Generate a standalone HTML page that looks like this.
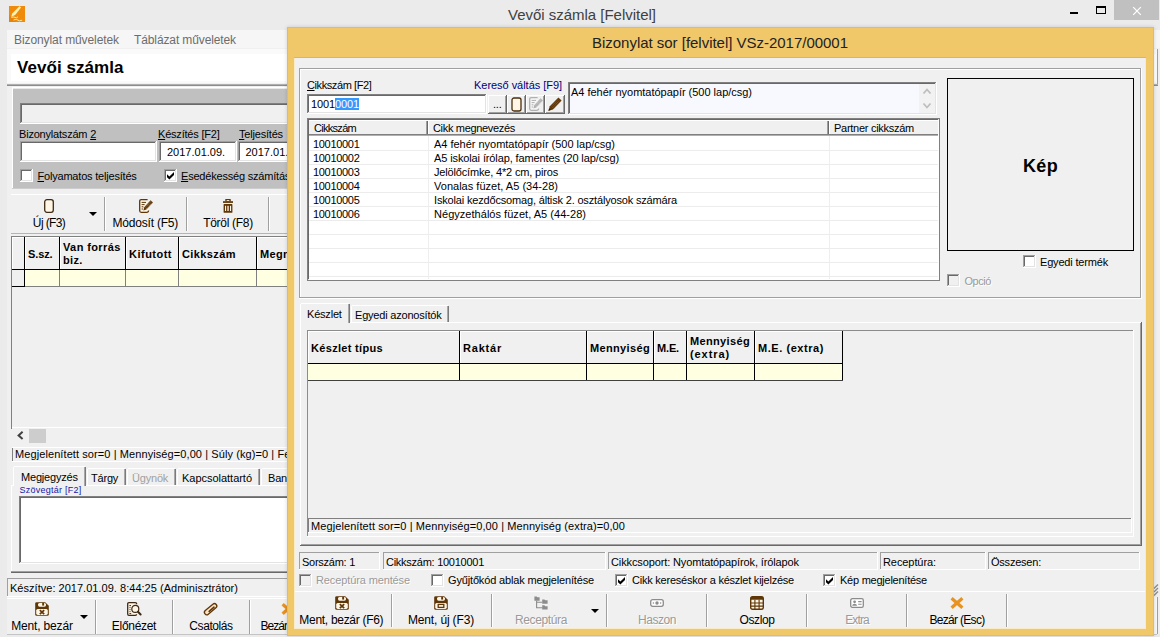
<!DOCTYPE html>
<html lang="hu"><head><meta charset="utf-8"><title>Vevői számla [Felvitel]</title>
<style>
html,body{margin:0;padding:0;}
body{width:1160px;height:637px;overflow:hidden;background:#EBEBEB;font-family:"Liberation Sans", sans-serif;position:relative;}
#root{position:absolute;left:0;top:0;width:1160px;height:637px;overflow:hidden;}
#root div,#root svg{position:absolute;}
.t{white-space:pre;line-height:normal;}
u{text-decoration:underline;}
</style></head>
<body><div id="root">
<div style="left:0px;top:0px;width:1160px;height:637px;background:#EBEBEB;"></div>
<div style="left:9px;top:6px;width:16px;height:16px;background:#EF8A0A;"></div>
<svg style="left:9px;top:6px" width="16" height="16" viewBox="0 0 16 16"><path d="M0 16V9L7 16z" fill="#D97A08" opacity="0.5"/><path d="M10.4 0.2L12.2 1.2L6.4 8.8L2.2 11L3.2 7.4z" fill="#FFF1B0"/><path d="M2.4 11.6q2-1.2 3.6-0.2t3-0.6M4.6 14q3-1.6 4.2 0t4.4 0.2" stroke="#FFE7A0" stroke-width="1" fill="none"/></svg>
<div id="t1" class="t" style="left:430px;top:6px;font-size:15px;color:#404040;width:304px;text-align:center;letter-spacing:-0.017px;">Vevői számla [Felvitel]</div>
<div style="left:1070px;top:12px;width:8px;height:2px;background:#000;"></div>
<div style="left:1096px;top:6px;width:10px;height:8px;border:1px solid #000;border-top:2px solid #000;box-sizing:border-box;"></div>
<div style="left:1114px;top:0px;width:45px;height:20px;background:#C0C0C0;"></div>
<svg style="left:1132px;top:6px" width="10" height="10" viewBox="0 0 10 10"><path d="M1.2 1.2l7.6 7.6m0-7.6l-7.6 7.6" stroke="#fff" stroke-width="1.2" fill="none"/></svg>
<div style="left:7px;top:30px;width:1153px;height:607px;background:#F0F0F0;"></div>
<div style="left:7px;top:30px;width:1153px;height:18px;background:#F6F6F6;"></div>
<div id="t2" class="t" style="left:14px;top:33px;font-size:12px;color:#6D6D6D;letter-spacing:-0.09px;">Bizonylat műveletek</div>
<div id="t3" class="t" style="left:134px;top:33px;font-size:12px;color:#6D6D6D;letter-spacing:-0.115px;">Táblázat műveletek</div>
<div style="left:7px;top:49px;width:1150px;height:34px;background:#FAFAFA;"></div>
<div style="left:11px;top:54px;width:1145px;height:27px;background:#FFFFFF;"></div>
<div style="left:1157px;top:49px;width:1px;height:36px;background:#A0A0A0;"></div>
<div id="t4" class="t" style="left:17px;top:58px;font-size:17px;color:#000;font-weight:bold;letter-spacing:0.055px;">Vevői számla</div>
<div style="left:7px;top:84px;width:1151px;height:1px;background:#B0B0B0;"></div>
<div style="left:7px;top:85px;width:1151px;height:1px;background:#8C8C8C;"></div>
<div style="left:12px;top:87px;width:275px;height:102px;background:#C0C0C0;"></div>
<div style="left:12px;top:87px;width:275px;height:1px;background:#FFFFFF;"></div>
<div style="left:12px;top:88px;width:275px;height:1px;background:#E8E8E8;"></div>
<div style="left:12px;top:87px;width:1px;height:102px;background:#FFFFFF;"></div>
<div style="left:12px;top:188px;width:275px;height:1px;background:#CDCDCD;"></div>
<div style="left:20px;top:103px;width:270px;height:21px;background:#F0F0F0;"></div>
<div style="left:20px;top:103px;width:270px;height:1px;background:#808080;"></div>
<div style="left:20px;top:103px;width:1px;height:21px;background:#808080;"></div>
<div style="left:20px;top:123px;width:270px;height:1px;background:#FFFFFF;"></div>
<div style="left:289px;top:103px;width:1px;height:21px;background:#FFFFFF;"></div>
<div style="left:21px;top:104px;width:268px;height:1px;background:#696969;"></div>
<div style="left:21px;top:104px;width:1px;height:19px;background:#696969;"></div>
<div style="left:21px;top:122px;width:268px;height:1px;background:#E3E3E3;"></div>
<div style="left:288px;top:104px;width:1px;height:19px;background:#E3E3E3;"></div>
<div id="t5" class="t" style="left:19px;top:128px;font-size:11px;color:#000;letter-spacing:-0.2px;">Bizonylatszám <u>2</u></div>
<div id="t6" class="t" style="left:158px;top:128px;font-size:11px;color:#000;letter-spacing:-0.2px;"><u>K</u>észítés [F2]</div>
<div id="t7" class="t" style="left:239px;top:128px;font-size:11px;color:#000;letter-spacing:-0.2px;"><u>T</u>eljesítés</div>
<div style="left:20px;top:141px;width:137px;height:21px;background:#FFFFFF;"></div>
<div style="left:20px;top:141px;width:137px;height:1px;background:#A0A0A0;"></div>
<div style="left:20px;top:141px;width:1px;height:21px;background:#A0A0A0;"></div>
<div style="left:20px;top:161px;width:137px;height:1px;background:#FFFFFF;"></div>
<div style="left:156px;top:141px;width:1px;height:21px;background:#FFFFFF;"></div>
<div style="left:21px;top:142px;width:135px;height:1px;background:#696969;"></div>
<div style="left:21px;top:142px;width:1px;height:19px;background:#696969;"></div>
<div style="left:21px;top:160px;width:135px;height:1px;background:#E3E3E3;"></div>
<div style="left:155px;top:142px;width:1px;height:19px;background:#E3E3E3;"></div>
<div style="left:159px;top:141px;width:78px;height:21px;background:#FFFFFF;"></div>
<div style="left:159px;top:141px;width:78px;height:1px;background:#A0A0A0;"></div>
<div style="left:159px;top:141px;width:1px;height:21px;background:#A0A0A0;"></div>
<div style="left:159px;top:161px;width:78px;height:1px;background:#FFFFFF;"></div>
<div style="left:236px;top:141px;width:1px;height:21px;background:#FFFFFF;"></div>
<div style="left:160px;top:142px;width:76px;height:1px;background:#696969;"></div>
<div style="left:160px;top:142px;width:1px;height:19px;background:#696969;"></div>
<div style="left:160px;top:160px;width:76px;height:1px;background:#E3E3E3;"></div>
<div style="left:235px;top:142px;width:1px;height:19px;background:#E3E3E3;"></div>
<div style="left:238px;top:141px;width:78px;height:21px;background:#FFFFFF;"></div>
<div style="left:238px;top:141px;width:78px;height:1px;background:#A0A0A0;"></div>
<div style="left:238px;top:141px;width:1px;height:21px;background:#A0A0A0;"></div>
<div style="left:238px;top:161px;width:78px;height:1px;background:#FFFFFF;"></div>
<div style="left:315px;top:141px;width:1px;height:21px;background:#FFFFFF;"></div>
<div style="left:239px;top:142px;width:76px;height:1px;background:#696969;"></div>
<div style="left:239px;top:142px;width:1px;height:19px;background:#696969;"></div>
<div style="left:239px;top:160px;width:76px;height:1px;background:#E3E3E3;"></div>
<div style="left:314px;top:142px;width:1px;height:19px;background:#E3E3E3;"></div>
<div id="t8" class="t" style="left:167px;top:146px;font-size:11px;color:#000;letter-spacing:0.007px;">2017.01.09.</div>
<div id="t9" class="t" style="left:245.5px;top:146px;font-size:11px;color:#000;letter-spacing:0.007px;">2017.01.09.</div>
<div style="left:20px;top:169px;width:13px;height:13px;background:#FFFFFF;"></div>
<div style="left:20px;top:169px;width:12px;height:1px;background:#A0A0A0;"></div>
<div style="left:20px;top:169px;width:1px;height:12px;background:#A0A0A0;"></div>
<div style="left:21px;top:170px;width:10px;height:1px;background:#696969;"></div>
<div style="left:21px;top:170px;width:1px;height:10px;background:#696969;"></div>
<div style="left:20px;top:181px;width:13px;height:1px;background:#FFFFFF;"></div>
<div style="left:32px;top:169px;width:1px;height:13px;background:#FFFFFF;"></div>
<div style="left:21px;top:180px;width:11px;height:1px;background:#E3E3E3;"></div>
<div style="left:31px;top:170px;width:1px;height:11px;background:#E3E3E3;"></div>
<div id="t10" class="t" style="left:37.5px;top:170px;font-size:11px;color:#000;letter-spacing:-0.2px;"><u>F</u>olyamatos teljesítés</div>
<div style="left:164px;top:169px;width:13px;height:13px;background:#FFFFFF;"></div>
<div style="left:164px;top:169px;width:12px;height:1px;background:#A0A0A0;"></div>
<div style="left:164px;top:169px;width:1px;height:12px;background:#A0A0A0;"></div>
<div style="left:165px;top:170px;width:10px;height:1px;background:#696969;"></div>
<div style="left:165px;top:170px;width:1px;height:10px;background:#696969;"></div>
<div style="left:164px;top:181px;width:13px;height:1px;background:#FFFFFF;"></div>
<div style="left:176px;top:169px;width:1px;height:13px;background:#FFFFFF;"></div>
<div style="left:165px;top:180px;width:11px;height:1px;background:#E3E3E3;"></div>
<div style="left:175px;top:170px;width:1px;height:11px;background:#E3E3E3;"></div>
<svg style="left:164px;top:169px" width="13" height="13" viewBox="0 0 13 13"><path d="M3 5.2v3l2.4 2.4 4.6-4.6v-3l-4.6 4.6z" fill="#000"/></svg>
<div id="t11" class="t" style="left:181px;top:170px;font-size:11px;color:#000;letter-spacing:-0.2px;"><u>E</u>sedékesség számítás</div>
<div style="left:11px;top:194px;width:276px;height:1px;background:#FFFFFF;"></div>
<div style="left:11px;top:233px;width:276px;height:1px;background:#B4B4B4;"></div>
<svg style="left:44px;top:199px" width="10" height="14" viewBox="0 0 10 14"><rect x="0.7" y="0.7" width="8.6" height="12.6" rx="2.2" fill="#FFF6E6" stroke="#3E2A14" stroke-width="1.3"/></svg>
<div id="t12" class="t" style="left:-11px;top:216px;font-size:12px;color:#000;width:120px;text-align:center;letter-spacing:-0.625px;">Új (F3)</div>
<svg style="left:88.5px;top:212px" width="8" height="4" viewBox="0 0 8 4"><path d="M0 0h8l-4 4z" fill="#000"/></svg>
<div style="left:104px;top:197px;width:1px;height:34px;background:#A0A0A0;"></div>
<div style="left:105px;top:197px;width:1px;height:34px;background:#FFFFFF;"></div>
<svg style="left:139px;top:199px" width="15" height="14" viewBox="0 0 15 14"><path d="M8.6 0.7H2.2Q0.7 0.7 0.7 2.2V11.8Q0.7 13.3 2.2 13.3H8Q9.6 13.3 9.6 11.6" fill="#FFF6E6" stroke="#5E3608" stroke-width="1.3"/><path d="M2.6 3.4h4.4M2.6 5.6h3M2.6 7.8h1.8M2.6 10h1.4" stroke="#5E3608" stroke-width="1"/><path d="M11.6 1.2l2.4 2.4-6.6 6.8-3 1.2 0.8-3.4z" fill="#5E3608"/><path d="M6.2 8.4l5.6-5.8M7.4 9.6l5.6-5.8" stroke="#FFF6E6" stroke-width="0.5" stroke-dasharray="1 0.8"/></svg>
<div id="t13" class="t" style="left:85.3px;top:216px;font-size:12px;color:#000;width:120px;text-align:center;letter-spacing:-0.193px;">Módosít (F5)</div>
<div style="left:186px;top:197px;width:1px;height:34px;background:#A0A0A0;"></div>
<div style="left:187px;top:197px;width:1px;height:34px;background:#FFFFFF;"></div>
<svg style="left:223px;top:199px" width="10" height="14" viewBox="0 0 10 14"><rect x="2.3" y="0" width="5.5" height="2.6" rx="0.6" fill="#5E3608"/><ellipse cx="5" cy="1.5" rx="1.6" ry="0.6" fill="#FFF6E6"/><rect x="0" y="2.2" width="10" height="1.7" fill="#5E3608"/><rect x="0.6" y="5.1" width="8.8" height="8.7" rx="0.6" fill="#5E3608"/><rect x="2" y="6.8" width="1.1" height="5.2" fill="#FFF6E6"/><rect x="4.3" y="6.8" width="1.5" height="5.2" fill="#F7DDBF"/><rect x="7" y="6.8" width="1.1" height="5.2" fill="#FFF6E6"/></svg>
<div id="t14" class="t" style="left:168px;top:216px;font-size:12px;color:#000;width:120px;text-align:center;letter-spacing:-0.3px;">Töröl (F8)</div>
<div style="left:268px;top:197px;width:1px;height:34px;background:#A0A0A0;"></div>
<div style="left:269px;top:197px;width:1px;height:34px;background:#FFFFFF;"></div>
<div style="left:11px;top:236px;width:1px;height:193px;background:#808080;"></div>
<div style="left:11px;top:236px;width:276px;height:1px;background:#808080;"></div>
<div style="left:12px;top:237px;width:12px;height:32px;background:#F0F0F0;"></div>
<div style="left:24px;top:237px;width:1px;height:50px;background:#000;"></div>
<div style="left:12px;top:237px;width:1px;height:32px;background:#FFFFFF;"></div>
<div style="left:12px;top:237px;width:12px;height:1px;background:#FFFFFF;"></div>
<div style="left:25px;top:237px;width:34px;height:32px;background:#F0F0F0;"></div>
<div style="left:59px;top:237px;width:1px;height:50px;background:#000;"></div>
<div style="left:25px;top:237px;width:1px;height:32px;background:#FFFFFF;"></div>
<div style="left:25px;top:237px;width:34px;height:1px;background:#FFFFFF;"></div>
<div style="left:60px;top:237px;width:65px;height:32px;background:#F0F0F0;"></div>
<div style="left:125px;top:237px;width:1px;height:50px;background:#000;"></div>
<div style="left:60px;top:237px;width:1px;height:32px;background:#FFFFFF;"></div>
<div style="left:60px;top:237px;width:65px;height:1px;background:#FFFFFF;"></div>
<div style="left:126px;top:237px;width:52px;height:32px;background:#F0F0F0;"></div>
<div style="left:178px;top:237px;width:1px;height:50px;background:#000;"></div>
<div style="left:126px;top:237px;width:1px;height:32px;background:#FFFFFF;"></div>
<div style="left:126px;top:237px;width:52px;height:1px;background:#FFFFFF;"></div>
<div style="left:179px;top:237px;width:77px;height:32px;background:#F0F0F0;"></div>
<div style="left:256px;top:237px;width:1px;height:50px;background:#000;"></div>
<div style="left:179px;top:237px;width:1px;height:32px;background:#FFFFFF;"></div>
<div style="left:179px;top:237px;width:77px;height:1px;background:#FFFFFF;"></div>
<div style="left:257px;top:237px;width:73px;height:32px;background:#F0F0F0;"></div>
<div style="left:330px;top:237px;width:1px;height:50px;background:#000;"></div>
<div style="left:257px;top:237px;width:1px;height:32px;background:#FFFFFF;"></div>
<div style="left:257px;top:237px;width:73px;height:1px;background:#FFFFFF;"></div>
<div style="left:12px;top:269px;width:319px;height:1px;background:#000;"></div>
<div style="left:12px;top:286px;width:319px;height:1px;background:#000;"></div>
<div style="left:25px;top:270px;width:262px;height:16px;background:#FFFFE1;"></div>
<div style="left:59px;top:270px;width:1px;height:16px;background:#808080;"></div>
<div style="left:125px;top:270px;width:1px;height:16px;background:#808080;"></div>
<div style="left:178px;top:270px;width:1px;height:16px;background:#808080;"></div>
<div style="left:256px;top:270px;width:1px;height:16px;background:#808080;"></div>
<div style="left:330px;top:270px;width:1px;height:16px;background:#808080;"></div>
<div style="left:25px;top:286px;width:262px;height:1px;background:#808080;"></div>
<div id="t15" class="t" style="left:28px;top:248px;font-size:11px;color:#000;font-weight:bold;letter-spacing:-0.116px;">S.sz.</div>
<div id="t16" class="t" style="left:63px;top:241px;font-size:11px;color:#000;font-weight:bold;letter-spacing:0.389px;">Van forrás</div>
<div id="t17" class="t" style="left:63px;top:254px;font-size:11px;color:#000;font-weight:bold;letter-spacing:0.35px;">biz.</div>
<div id="t18" class="t" style="left:129px;top:248px;font-size:11px;color:#000;font-weight:bold;letter-spacing:0.488px;">Kifutott</div>
<div id="t19" class="t" style="left:182px;top:248px;font-size:11px;color:#000;font-weight:bold;letter-spacing:0.404px;">Cikkszám</div>
<div id="t20" class="t" style="left:260px;top:248px;font-size:11px;color:#000;font-weight:bold;letter-spacing:0.35px;">Megnevezés</div>
<div style="left:12px;top:428px;width:275px;height:16px;background:#F0F0F0;"></div>
<div style="left:12px;top:427px;width:275px;height:1px;background:#FFFFFF;"></div>
<svg style="left:16px;top:430px" width="8" height="10" viewBox="0 0 8 10"><path d="M6.6 1.8l-4 3.6 4 3.6" stroke="#404040" stroke-width="2" fill="none"/></svg>
<div style="left:29px;top:429px;width:17px;height:14px;background:#CDCDCD;"></div>
<div style="left:12px;top:447px;width:276px;height:1px;background:#FFFFFF;"></div>
<div style="left:12px;top:448px;width:1px;height:13px;background:#808080;"></div>
<div style="left:12px;top:461px;width:276px;height:1px;background:#FFFFFF;"></div>
<div id="t21" class="t" style="left:15px;top:448px;font-size:11px;color:#000;letter-spacing:0.089px;">Megjelenített sor=0 | Mennyiség=0,00 | Súly (kg)=0 | Fej</div>
<div style="left:11px;top:485px;width:276px;height:1px;background:#FFFFFF;"></div>
<div style="left:11px;top:485px;width:1px;height:88px;background:#FFFFFF;"></div>
<div style="left:13px;top:466px;width:72px;height:20px;background:#F0F0F0;"></div>
<div style="left:14px;top:466px;width:71px;height:1px;background:#FFFFFF;"></div>
<div style="left:13px;top:467px;width:1px;height:19px;background:#FFFFFF;"></div>
<div style="left:85px;top:467px;width:1px;height:19px;background:#7A7A7A;"></div>
<div style="left:84px;top:467px;width:1px;height:19px;background:#A8A8A8;"></div>
<div id="t22" class="t" style="left:21px;top:471px;font-size:11px;color:#000;letter-spacing:-0.2px;">Megjegyzés</div>
<div style="left:88px;top:468px;width:37px;height:1px;background:#FFFFFF;"></div>
<div style="left:87px;top:469px;width:1px;height:16px;background:#FFFFFF;"></div>
<div style="left:125px;top:469px;width:1px;height:16px;background:#7A7A7A;"></div>
<div style="left:124px;top:469px;width:1px;height:16px;background:#A8A8A8;"></div>
<div id="t23" class="t" style="left:91px;top:472px;font-size:11px;color:#000;letter-spacing:-0.2px;">Tárgy</div>
<div style="left:128px;top:468px;width:47px;height:1px;background:#FFFFFF;"></div>
<div style="left:127px;top:469px;width:1px;height:16px;background:#FFFFFF;"></div>
<div style="left:175px;top:469px;width:1px;height:16px;background:#7A7A7A;"></div>
<div style="left:174px;top:469px;width:1px;height:16px;background:#A8A8A8;"></div>
<div id="t24" class="t" style="left:132px;top:472px;font-size:11px;color:#A0A0A0;letter-spacing:-0.2px;">Ügynök</div>
<div style="left:178px;top:468px;width:81px;height:1px;background:#FFFFFF;"></div>
<div style="left:177px;top:469px;width:1px;height:16px;background:#FFFFFF;"></div>
<div style="left:259px;top:469px;width:1px;height:16px;background:#7A7A7A;"></div>
<div style="left:258px;top:469px;width:1px;height:16px;background:#A8A8A8;"></div>
<div id="t25" class="t" style="left:182px;top:472px;font-size:11px;color:#000;letter-spacing:-0.023px;">Kapcsolattartó</div>
<div style="left:262px;top:468px;width:38px;height:1px;background:#FFFFFF;"></div>
<div style="left:261px;top:469px;width:1px;height:16px;background:#FFFFFF;"></div>
<div style="left:300px;top:469px;width:1px;height:16px;background:#7A7A7A;"></div>
<div style="left:299px;top:469px;width:1px;height:16px;background:#A8A8A8;"></div>
<div id="t26" class="t" style="left:268px;top:472px;font-size:11px;color:#000;letter-spacing:-0.2px;">Bank</div>
<div id="t27" class="t" style="left:19.5px;top:485px;font-size:9px;color:#1818A8;letter-spacing:0.248px;">Szövegtár [F2]</div>
<div style="left:19px;top:496px;width:280px;height:68px;background:#FFFFFF;"></div>
<div style="left:19px;top:496px;width:280px;height:1px;background:#808080;"></div>
<div style="left:19px;top:496px;width:1px;height:68px;background:#808080;"></div>
<div style="left:19px;top:563px;width:280px;height:1px;background:#FFFFFF;"></div>
<div style="left:298px;top:496px;width:1px;height:68px;background:#FFFFFF;"></div>
<div style="left:20px;top:497px;width:278px;height:1px;background:#696969;"></div>
<div style="left:20px;top:497px;width:1px;height:66px;background:#696969;"></div>
<div style="left:20px;top:562px;width:278px;height:1px;background:#E3E3E3;"></div>
<div style="left:297px;top:497px;width:1px;height:66px;background:#E3E3E3;"></div>
<div style="left:11px;top:572px;width:276px;height:1px;background:#696969;"></div>
<div style="left:11px;top:571px;width:276px;height:1px;background:#A0A0A0;"></div>
<div style="left:7px;top:578px;width:290px;height:19px;background:#F0F0F0;"></div>
<div style="left:7px;top:578px;width:290px;height:1px;background:#A0A0A0;"></div>
<div style="left:7px;top:578px;width:1px;height:19px;background:#A0A0A0;"></div>
<div style="left:7px;top:596px;width:290px;height:1px;background:#FFFFFF;"></div>
<div style="left:296px;top:578px;width:1px;height:19px;background:#FFFFFF;"></div>
<div id="t28" class="t" style="left:10px;top:582px;font-size:11px;color:#000;letter-spacing:0.025px;">Készítve: 2017.01.09. 8:44:25 (Adminisztrátor)</div>
<div style="left:7px;top:598px;width:280px;height:1px;background:#FFFFFF;"></div>
<svg style="left:35px;top:602px" width="14" height="14" viewBox="0 0 14 14"><path d="M1.6 0.2H10.2L13.8 3.8V12.4Q13.8 13.8 12.4 13.8H1.6Q0.2 13.8 0.2 12.4V1.6Q0.2 0.2 1.6 0.2z" fill="#5E3608"/><rect x="3" y="1" width="8" height="3.7" rx="1.6" fill="#FFF6E6"/><rect x="7.2" y="0.8" width="1.9" height="2.8" fill="#5E3608"/><rect x="1.2" y="6.9" width="11.6" height="6" rx="1.6" fill="#FFF6E6"/><path d="M4.8 8.2l4.4 4m0-4l-4.4 4" stroke="#5E3608" stroke-width="1.7" fill="none"/></svg>
<div id="t29" class="t" style="left:-18px;top:619px;font-size:12px;color:#000;width:120px;text-align:center;letter-spacing:-0.152px;">Ment, bezár</div>
<svg style="left:80px;top:615px" width="8" height="4" viewBox="0 0 8 4"><path d="M0 0h8l-4 4z" fill="#000"/></svg>
<div style="left:95px;top:600px;width:1px;height:34px;background:#A0A0A0;"></div>
<div style="left:96px;top:600px;width:1px;height:34px;background:#FFFFFF;"></div>
<svg style="left:127px;top:602px" width="15" height="14" viewBox="0 0 15 14"><path d="M9.6 2.2V1.9Q9.6 0.7 8.4 0.7H1.9Q0.7 0.7 0.7 1.9V12.1Q0.7 13.3 1.9 13.3H8.4Q9.6 13.3 9.6 12.3" fill="#FFF6E6" stroke="#3E2A14" stroke-width="1.3"/><path d="M2.4 3.6h1.6M2.4 11.6h1.8" stroke="#3E2A14" stroke-width="1"/><circle cx="3" cy="5.6" r="0.55" fill="#3E2A14"/><circle cx="3" cy="7.6" r="0.55" fill="#3E2A14"/><circle cx="3" cy="9.6" r="0.55" fill="#3E2A14"/><circle cx="8.3" cy="6.9" r="3.5" fill="#FFF6E6" stroke="#3E2A14" stroke-width="1.2"/><path d="M11 9.8l2.6 2.7" stroke="#3E2A14" stroke-width="2" stroke-linecap="round"/></svg>
<div id="t30" class="t" style="left:74px;top:619px;font-size:12px;color:#000;width:120px;text-align:center;letter-spacing:-0.3px;">Előnézet</div>
<div style="left:172px;top:600px;width:1px;height:34px;background:#A0A0A0;"></div>
<div style="left:173px;top:600px;width:1px;height:34px;background:#FFFFFF;"></div>
<svg style="left:203px;top:602px" width="16" height="14" viewBox="0 0 16 14"><path d="M3.8 10.4L11.4 4" stroke="#5E3608" stroke-width="6" stroke-linecap="round"/><path d="M3.8 10.4L11.4 4" stroke="#FBE3C4" stroke-width="3.4" stroke-linecap="round"/><path d="M6.2 9.4L11 5.2" stroke="#5E3608" stroke-width="1.6" stroke-linecap="round"/></svg>
<div id="t31" class="t" style="left:151px;top:619px;font-size:12px;color:#000;width:120px;text-align:center;letter-spacing:-0.423px;">Csatolás</div>
<div style="left:249px;top:600px;width:1px;height:34px;background:#A0A0A0;"></div>
<div style="left:250px;top:600px;width:1px;height:34px;background:#FFFFFF;"></div>
<svg style="left:281px;top:603px" width="14" height="12" viewBox="0 0 14 12"><path d="M1.6 1.2l10.8 9.6m0-9.6l-10.8 9.6" stroke="#E8921F" stroke-width="3.2" fill="none"/></svg>
<div id="t32" class="t" style="left:260.5px;top:619px;font-size:12px;color:#000;letter-spacing:-0.972px;">Bezár</div>
<div style="left:0px;top:634px;width:1160px;height:3px;background:#EBEBEB;"></div>
<div style="left:7px;top:634px;width:1150px;height:1px;background:#C4C4C4;"></div>
<svg style="left:1154px;top:584px" width="6" height="12" viewBox="0 0 6 12"><path d="M0 4.5l4-4M0 8l4-4M0 11.5l4-4" stroke="#8C8C8C" stroke-width="1.3" fill="none"/></svg>
<div style="left:1154px;top:597px;width:3px;height:37px;background:#F8F8F8;"></div>
<div style="left:1157px;top:597px;width:1px;height:37px;background:#A0A0A0;"></div>
<div style="left:287px;top:27px;width:867px;height:609px;box-shadow:0 0 4px rgba(0,0,0,0.15);background:#E3BB60;"></div>
<div style="left:288px;top:28px;width:865px;height:607px;background:#F0C869;"></div>
<div style="left:294px;top:57px;width:852px;height:572px;background:#FAEBC8;"></div>
<div style="left:294px;top:57px;width:852px;height:1px;background:#DDB65C;"></div>
<div id="t33" class="t" style="left:420px;top:34px;font-size:15px;color:#222;width:600px;text-align:center;letter-spacing:-0.021px;">Bizonylat sor [felvitel] VSz-2017/00001</div>
<div style="left:295px;top:58px;width:850px;height:570px;background:#F0F0F0;"></div>
<div style="left:299px;top:68px;width:843px;height:1px;background:#A0A0A0;"></div>
<div style="left:299px;top:68px;width:1px;height:231px;background:#A0A0A0;"></div>
<div style="left:299px;top:298px;width:843px;height:1px;background:#FFFFFF;"></div>
<div style="left:1141px;top:68px;width:1px;height:231px;background:#FFFFFF;"></div>
<div style="left:300px;top:69px;width:841px;height:1px;background:#FFFFFF;"></div>
<div style="left:300px;top:69px;width:1px;height:229px;background:#FFFFFF;"></div>
<div style="left:300px;top:297px;width:841px;height:1px;background:#A0A0A0;"></div>
<div style="left:1140px;top:69px;width:1px;height:229px;background:#A0A0A0;"></div>
<div id="t34" class="t" style="left:307px;top:79px;font-size:11px;color:#000;letter-spacing:-0.407px;"><u>C</u>ikkszám [F2]</div>
<div id="t35" class="t" style="left:474px;top:79px;font-size:11px;color:#000080;letter-spacing:-0.036px;">Kereső váltás [F9]</div>
<div style="left:307px;top:94px;width:180px;height:20px;background:#FFFFFF;"></div>
<div style="left:307px;top:94px;width:180px;height:1px;background:#808080;"></div>
<div style="left:307px;top:94px;width:1px;height:20px;background:#808080;"></div>
<div style="left:307px;top:113px;width:180px;height:1px;background:#FFFFFF;"></div>
<div style="left:486px;top:94px;width:1px;height:20px;background:#FFFFFF;"></div>
<div style="left:308px;top:95px;width:178px;height:1px;background:#696969;"></div>
<div style="left:308px;top:95px;width:1px;height:18px;background:#696969;"></div>
<div style="left:308px;top:112px;width:178px;height:1px;background:#E3E3E3;"></div>
<div style="left:485px;top:95px;width:1px;height:18px;background:#E3E3E3;"></div>
<div id="t36" class="t" style="left:311px;top:98px;font-size:11px;color:#000;letter-spacing:-0.121px;">1001<span style="background:#3399FF;color:#fff">0001</span></div>
<div style="left:488px;top:95px;width:19px;height:19px;background:#F0F0F0;"></div>
<div style="left:488px;top:95px;width:19px;height:1px;background:#FFFFFF;"></div>
<div style="left:488px;top:95px;width:1px;height:19px;background:#FFFFFF;"></div>
<div style="left:488px;top:113px;width:19px;height:1px;background:#696969;"></div>
<div style="left:506px;top:95px;width:1px;height:19px;background:#696969;"></div>
<div style="left:489px;top:112px;width:17px;height:1px;background:#A0A0A0;"></div>
<div style="left:505px;top:96px;width:1px;height:17px;background:#A0A0A0;"></div>
<div id="t37" class="t" style="left:493px;top:98px;font-size:11px;color:#000;letter-spacing:-0.2px;">...</div>
<div style="left:507px;top:95px;width:19px;height:19px;background:#F0F0F0;"></div>
<div style="left:507px;top:95px;width:19px;height:1px;background:#FFFFFF;"></div>
<div style="left:507px;top:95px;width:1px;height:19px;background:#FFFFFF;"></div>
<div style="left:507px;top:113px;width:19px;height:1px;background:#696969;"></div>
<div style="left:525px;top:95px;width:1px;height:19px;background:#696969;"></div>
<div style="left:508px;top:112px;width:17px;height:1px;background:#A0A0A0;"></div>
<div style="left:524px;top:96px;width:1px;height:17px;background:#A0A0A0;"></div>
<svg style="left:511px;top:97px" width="11" height="15" viewBox="0 0 11 15"><rect x="1" y="1" width="9" height="13" rx="2" fill="#FFF6E6" stroke="#4A2E10" stroke-width="1.3"/></svg>
<div style="left:526px;top:95px;width:19px;height:19px;background:#F0F0F0;"></div>
<div style="left:526px;top:95px;width:19px;height:1px;background:#FFFFFF;"></div>
<div style="left:526px;top:95px;width:1px;height:19px;background:#FFFFFF;"></div>
<div style="left:526px;top:113px;width:19px;height:1px;background:#696969;"></div>
<div style="left:544px;top:95px;width:1px;height:19px;background:#696969;"></div>
<div style="left:527px;top:112px;width:17px;height:1px;background:#A0A0A0;"></div>
<div style="left:543px;top:96px;width:1px;height:17px;background:#A0A0A0;"></div>
<svg style="left:529px;top:97px" width="15" height="14" viewBox="0 0 15 14"><path d="M8.6 0.7H2.2Q0.7 0.7 0.7 2.2V11.8Q0.7 13.3 2.2 13.3H8Q9.6 13.3 9.6 11.6" fill="#F6F6F6" stroke="#B0B0B0" stroke-width="1.3"/><path d="M2.6 3.4h4.4M2.6 5.6h3M2.6 7.8h1.8M2.6 10h1.4" stroke="#B0B0B0" stroke-width="1"/><path d="M11.6 1.2l2.4 2.4-6.6 6.8-3 1.2 0.8-3.4z" fill="#B0B0B0"/><path d="M6.2 8.4l5.6-5.8M7.4 9.6l5.6-5.8" stroke="#F6F6F6" stroke-width="0.5" stroke-dasharray="1 0.8"/></svg>
<div style="left:545px;top:95px;width:20px;height:19px;background:#F0F0F0;"></div>
<div style="left:545px;top:95px;width:20px;height:1px;background:#FFFFFF;"></div>
<div style="left:545px;top:95px;width:1px;height:19px;background:#FFFFFF;"></div>
<div style="left:545px;top:113px;width:20px;height:1px;background:#696969;"></div>
<div style="left:564px;top:95px;width:1px;height:19px;background:#696969;"></div>
<div style="left:546px;top:112px;width:18px;height:1px;background:#A0A0A0;"></div>
<div style="left:563px;top:96px;width:1px;height:17px;background:#A0A0A0;"></div>
<svg style="left:547px;top:96px" width="16" height="16" viewBox="0 0 16 16"><path d="M1.4 14.8l1.4-4.6 8.6-8.8 3.2 3.2-8.6 8.8z" fill="#5E3608"/><path d="M4.4 10.4l6.8-7M5.6 11.6l6.8-7M6.8 12.6l6.6-6.8" stroke="#B97A3C" stroke-width="0.6" stroke-dasharray="1 0.7"/><path d="M1.4 14.8l0.8-2.4 1.6 1.6z" fill="#2A1604"/></svg>
<div style="left:568px;top:82px;width:369px;height:33px;background:#F8F8FF;"></div>
<div style="left:568px;top:82px;width:369px;height:1px;background:#808080;"></div>
<div style="left:568px;top:82px;width:1px;height:33px;background:#808080;"></div>
<div style="left:568px;top:114px;width:369px;height:1px;background:#FFFFFF;"></div>
<div style="left:936px;top:82px;width:1px;height:33px;background:#FFFFFF;"></div>
<div style="left:569px;top:83px;width:367px;height:1px;background:#696969;"></div>
<div style="left:569px;top:83px;width:1px;height:31px;background:#696969;"></div>
<div style="left:569px;top:113px;width:367px;height:1px;background:#E3E3E3;"></div>
<div style="left:935px;top:83px;width:1px;height:31px;background:#E3E3E3;"></div>
<div style="left:919px;top:84px;width:16px;height:29px;background:#F2F2F2;"></div>
<svg style="left:921.5px;top:87px" width="10" height="8" viewBox="0 0 10 8"><path d="M1.5 6.5l3.5-4 3.5 4" stroke="#BEBEBE" stroke-width="1.8" fill="none"/></svg>
<svg style="left:921.5px;top:102px" width="10" height="8" viewBox="0 0 10 8"><path d="M1.5 1.5l3.5 4 3.5-4" stroke="#BEBEBE" stroke-width="1.8" fill="none"/></svg>
<div id="t38" class="t" style="left:571px;top:86px;font-size:11px;color:#000;letter-spacing:-0.017px;">A4 fehér nyomtatópapír (500 lap/csg)</div>
<div style="left:307px;top:118px;width:633px;height:163px;background:#FFFFFF;"></div>
<div style="left:307px;top:118px;width:633px;height:1px;background:#808080;"></div>
<div style="left:307px;top:118px;width:1px;height:163px;background:#808080;"></div>
<div style="left:307px;top:280px;width:633px;height:1px;background:#FFFFFF;"></div>
<div style="left:939px;top:118px;width:1px;height:163px;background:#FFFFFF;"></div>
<div style="left:308px;top:119px;width:631px;height:1px;background:#696969;"></div>
<div style="left:308px;top:119px;width:1px;height:161px;background:#696969;"></div>
<div style="left:308px;top:279px;width:631px;height:1px;background:#E3E3E3;"></div>
<div style="left:938px;top:119px;width:1px;height:161px;background:#E3E3E3;"></div>
<div style="left:307px;top:280px;width:633px;height:1px;background:#808080;"></div>
<div style="left:939px;top:118px;width:1px;height:163px;background:#808080;"></div>
<div style="left:938px;top:120px;width:1px;height:160px;background:#FFFFFF;"></div>
<div style="left:309px;top:279px;width:629px;height:1px;background:#FFFFFF;"></div>
<div style="left:309px;top:120px;width:629px;height:14px;background:#F0F0F0;"></div>
<div style="left:309px;top:134px;width:629px;height:1px;background:#808080;"></div>
<div style="left:309px;top:135px;width:629px;height:1px;background:#B0B0B0;"></div>
<div style="left:426px;top:120px;width:1px;height:14px;background:#A0A0A0;"></div>
<div style="left:427px;top:120px;width:1px;height:14px;background:#696969;"></div>
<div style="left:428px;top:120px;width:1px;height:14px;background:#FFFFFF;"></div>
<div style="left:827px;top:120px;width:1px;height:14px;background:#A0A0A0;"></div>
<div style="left:828px;top:120px;width:1px;height:14px;background:#696969;"></div>
<div style="left:829px;top:120px;width:1px;height:14px;background:#FFFFFF;"></div>
<div style="left:309px;top:120px;width:629px;height:1px;background:#FFFFFF;"></div>
<div id="t39" class="t" style="left:314px;top:122px;font-size:11px;color:#000;letter-spacing:-0.709px;">Cikkszám</div>
<div id="t40" class="t" style="left:433px;top:122px;font-size:11px;color:#000;letter-spacing:-0.322px;">Cikk megnevezés</div>
<div id="t41" class="t" style="left:834px;top:122px;font-size:11px;color:#000;letter-spacing:-0.272px;">Partner cikkszám</div>
<div style="left:309px;top:150px;width:629px;height:1px;background:#ECECEC;"></div>
<div style="left:309px;top:164px;width:629px;height:1px;background:#ECECEC;"></div>
<div style="left:309px;top:178px;width:629px;height:1px;background:#ECECEC;"></div>
<div style="left:309px;top:192px;width:629px;height:1px;background:#ECECEC;"></div>
<div style="left:309px;top:206px;width:629px;height:1px;background:#ECECEC;"></div>
<div style="left:309px;top:220px;width:629px;height:1px;background:#ECECEC;"></div>
<div style="left:309px;top:234px;width:629px;height:1px;background:#ECECEC;"></div>
<div style="left:309px;top:248px;width:629px;height:1px;background:#ECECEC;"></div>
<div style="left:309px;top:262px;width:629px;height:1px;background:#ECECEC;"></div>
<div style="left:309px;top:276px;width:629px;height:1px;background:#ECECEC;"></div>
<div style="left:428px;top:136px;width:1px;height:143px;background:#EEEEEE;"></div>
<div style="left:829px;top:136px;width:1px;height:143px;background:#EEEEEE;"></div>
<div id="t42" class="t" style="left:313px;top:138px;font-size:11px;color:#000;letter-spacing:-0.307px;">10010001</div>
<div id="t43" class="t" style="left:434px;top:138px;font-size:11px;color:#000;letter-spacing:-0.017px;">A4 fehér nyomtatópapír (500 lap/csg)</div>
<div id="t44" class="t" style="left:313px;top:152px;font-size:11px;color:#000;letter-spacing:-0.307px;">10010002</div>
<div id="t45" class="t" style="left:434px;top:152px;font-size:11px;color:#000;letter-spacing:-0.114px;">A5 iskolai írólap, famentes (20 lap/csg)</div>
<div id="t46" class="t" style="left:313px;top:166px;font-size:11px;color:#000;letter-spacing:-0.307px;">10010003</div>
<div id="t47" class="t" style="left:434px;top:166px;font-size:11px;color:#000;letter-spacing:-0.169px;">Jelölőcímke, 4*2 cm, piros</div>
<div id="t48" class="t" style="left:313px;top:180px;font-size:11px;color:#000;letter-spacing:-0.307px;">10010004</div>
<div id="t49" class="t" style="left:434px;top:180px;font-size:11px;color:#000;letter-spacing:0.019px;">Vonalas füzet, A5 (34-28)</div>
<div id="t50" class="t" style="left:313px;top:194px;font-size:11px;color:#000;letter-spacing:-0.307px;">10010005</div>
<div id="t51" class="t" style="left:434px;top:194px;font-size:11px;color:#000;letter-spacing:-0.166px;">Iskolai kezdőcsomag, áltisk 2. osztályosok számára</div>
<div id="t52" class="t" style="left:313px;top:208px;font-size:11px;color:#000;letter-spacing:-0.307px;">10010006</div>
<div id="t53" class="t" style="left:434px;top:208px;font-size:11px;color:#000;letter-spacing:0.032px;">Négyzethálós füzet, A5 (44-28)</div>
<div style="left:947px;top:78px;width:187px;height:173px;background:#F0F0F0;border:1px solid #000;box-sizing:border-box;"></div>
<div id="t54" class="t" style="left:946.5px;top:156px;font-size:18px;color:#000;font-weight:bold;width:188px;text-align:center;letter-spacing:0.328px;">Kép</div>
<div style="left:1023px;top:255px;width:13px;height:13px;background:#FFFFFF;"></div>
<div style="left:1023px;top:255px;width:12px;height:1px;background:#A0A0A0;"></div>
<div style="left:1023px;top:255px;width:1px;height:12px;background:#A0A0A0;"></div>
<div style="left:1024px;top:256px;width:10px;height:1px;background:#696969;"></div>
<div style="left:1024px;top:256px;width:1px;height:10px;background:#696969;"></div>
<div style="left:1023px;top:267px;width:13px;height:1px;background:#FFFFFF;"></div>
<div style="left:1035px;top:255px;width:1px;height:13px;background:#FFFFFF;"></div>
<div style="left:1024px;top:266px;width:11px;height:1px;background:#E3E3E3;"></div>
<div style="left:1034px;top:256px;width:1px;height:11px;background:#E3E3E3;"></div>
<div id="t55" class="t" style="left:1040px;top:256px;font-size:11px;color:#000;letter-spacing:-0.178px;">Egyedi termék</div>
<div style="left:947px;top:274px;width:13px;height:13px;background:#F0F0F0;"></div>
<div style="left:947px;top:274px;width:12px;height:1px;background:#A0A0A0;"></div>
<div style="left:947px;top:274px;width:1px;height:12px;background:#A0A0A0;"></div>
<div style="left:948px;top:275px;width:10px;height:1px;background:#696969;"></div>
<div style="left:948px;top:275px;width:1px;height:10px;background:#696969;"></div>
<div style="left:947px;top:286px;width:13px;height:1px;background:#FFFFFF;"></div>
<div style="left:959px;top:274px;width:1px;height:13px;background:#FFFFFF;"></div>
<div style="left:948px;top:285px;width:11px;height:1px;background:#E3E3E3;"></div>
<div style="left:958px;top:275px;width:1px;height:11px;background:#E3E3E3;"></div>
<div id="t56" class="t" style="left:964.5px;top:275px;font-size:11px;color:#9A9A9A;text-shadow:1px 1px 0 #fff;letter-spacing:-0.45px;">Opció</div>
<div style="left:300px;top:322px;width:841px;height:1px;background:#FFFFFF;"></div>
<div style="left:300px;top:322px;width:1px;height:224px;background:#FFFFFF;"></div>
<div style="left:1141px;top:322px;width:1px;height:224px;background:#696969;"></div>
<div style="left:1140px;top:323px;width:1px;height:222px;background:#A0A0A0;"></div>
<div style="left:300px;top:545px;width:842px;height:1px;background:#696969;"></div>
<div style="left:301px;top:544px;width:840px;height:1px;background:#A0A0A0;"></div>
<div style="left:301px;top:304px;width:48px;height:19px;background:#F0F0F0;"></div>
<div style="left:301px;top:303px;width:48px;height:1px;background:#FFFFFF;"></div>
<div style="left:300px;top:304px;width:1px;height:19px;background:#FFFFFF;"></div>
<div style="left:349px;top:304px;width:1px;height:19px;background:#7A7A7A;"></div>
<div style="left:348px;top:304px;width:1px;height:19px;background:#A8A8A8;"></div>
<div id="t57" class="t" style="left:307px;top:308px;font-size:11px;color:#000;letter-spacing:-0.2px;">Készlet</div>
<div style="left:352px;top:305px;width:96px;height:1px;background:#FFFFFF;"></div>
<div style="left:351px;top:306px;width:1px;height:16px;background:#FFFFFF;"></div>
<div style="left:448px;top:306px;width:1px;height:16px;background:#7A7A7A;"></div>
<div style="left:447px;top:306px;width:1px;height:16px;background:#A8A8A8;"></div>
<div id="t58" class="t" style="left:355px;top:309px;font-size:11px;color:#000;letter-spacing:-0.2px;">Egyedi azonosítók</div>
<div style="left:307px;top:330px;width:826px;height:1px;background:#8C8C8C;"></div>
<div style="left:307px;top:330px;width:1px;height:207px;background:#8C8C8C;"></div>
<div style="left:307px;top:536px;width:827px;height:1px;background:#FFFFFF;"></div>
<div style="left:1133px;top:330px;width:1px;height:207px;background:#FFFFFF;"></div>
<div style="left:308px;top:331px;width:1px;height:32px;background:#FFFFFF;"></div>
<div style="left:308px;top:331px;width:151px;height:1px;background:#FFFFFF;"></div>
<div style="left:460px;top:331px;width:1px;height:32px;background:#FFFFFF;"></div>
<div style="left:460px;top:331px;width:126px;height:1px;background:#FFFFFF;"></div>
<div style="left:587px;top:331px;width:1px;height:32px;background:#FFFFFF;"></div>
<div style="left:587px;top:331px;width:66px;height:1px;background:#FFFFFF;"></div>
<div style="left:654px;top:331px;width:1px;height:32px;background:#FFFFFF;"></div>
<div style="left:654px;top:331px;width:32px;height:1px;background:#FFFFFF;"></div>
<div style="left:687px;top:331px;width:1px;height:32px;background:#FFFFFF;"></div>
<div style="left:687px;top:331px;width:67px;height:1px;background:#FFFFFF;"></div>
<div style="left:755px;top:331px;width:1px;height:32px;background:#FFFFFF;"></div>
<div style="left:755px;top:331px;width:87px;height:1px;background:#FFFFFF;"></div>
<div style="left:308px;top:364px;width:534px;height:16px;background:#FFFFE1;"></div>
<div style="left:459px;top:331px;width:1px;height:50px;background:#000;"></div>
<div style="left:586px;top:331px;width:1px;height:50px;background:#000;"></div>
<div style="left:653px;top:331px;width:1px;height:50px;background:#000;"></div>
<div style="left:686px;top:331px;width:1px;height:50px;background:#000;"></div>
<div style="left:754px;top:331px;width:1px;height:50px;background:#000;"></div>
<div style="left:842px;top:331px;width:1px;height:50px;background:#000;"></div>
<div style="left:308px;top:363px;width:535px;height:1px;background:#000;"></div>
<div style="left:308px;top:380px;width:535px;height:1px;background:#404040;"></div>
<div id="t59" class="t" style="left:311px;top:342px;font-size:11px;color:#000;font-weight:bold;letter-spacing:0.319px;">Készlet típus</div>
<div id="t60" class="t" style="left:463px;top:342px;font-size:11px;color:#000;font-weight:bold;letter-spacing:0.792px;">Raktár</div>
<div id="t61" class="t" style="left:590px;top:342px;font-size:11px;color:#000;font-weight:bold;letter-spacing:0.349px;">Mennyiség</div>
<div id="t62" class="t" style="left:657px;top:342px;font-size:11px;color:#000;font-weight:bold;letter-spacing:-0.156px;">M.E.</div>
<div id="t63" class="t" style="left:690px;top:335px;font-size:11px;color:#000;font-weight:bold;letter-spacing:0.349px;">Mennyiség</div>
<div id="t64" class="t" style="left:690px;top:348px;font-size:11px;color:#000;font-weight:bold;letter-spacing:0.911px;">(extra)</div>
<div id="t65" class="t" style="left:758px;top:342px;font-size:11px;color:#000;font-weight:bold;letter-spacing:0.559px;">M.E. (extra)</div>
<div style="left:308px;top:518px;width:824px;height:15px;background:#F0F0F0;"></div>
<div style="left:308px;top:518px;width:824px;height:1px;background:#808080;"></div>
<div style="left:308px;top:518px;width:1px;height:15px;background:#808080;"></div>
<div style="left:308px;top:532px;width:824px;height:1px;background:#FFFFFF;"></div>
<div style="left:1131px;top:518px;width:1px;height:15px;background:#FFFFFF;"></div>
<div id="t66" class="t" style="left:311px;top:520px;font-size:11px;color:#000;letter-spacing:0.087px;">Megjelenített sor=0 | Mennyiség=0,00 | Mennyiség (extra)=0,00</div>
<div style="left:299px;top:552px;width:81px;height:18px;background:#F0F0F0;"></div>
<div style="left:299px;top:552px;width:81px;height:1px;background:#A0A0A0;"></div>
<div style="left:299px;top:552px;width:1px;height:18px;background:#A0A0A0;"></div>
<div style="left:299px;top:569px;width:81px;height:1px;background:#FFFFFF;"></div>
<div style="left:379px;top:552px;width:1px;height:18px;background:#FFFFFF;"></div>
<div id="t67" class="t" style="left:302px;top:556px;font-size:11px;color:#000;letter-spacing:-0.264px;">Sorszám: 1</div>
<div style="left:383px;top:552px;width:223px;height:18px;background:#F0F0F0;"></div>
<div style="left:383px;top:552px;width:223px;height:1px;background:#A0A0A0;"></div>
<div style="left:383px;top:552px;width:1px;height:18px;background:#A0A0A0;"></div>
<div style="left:383px;top:569px;width:223px;height:1px;background:#FFFFFF;"></div>
<div style="left:605px;top:552px;width:1px;height:18px;background:#FFFFFF;"></div>
<div id="t68" class="t" style="left:386px;top:556px;font-size:11px;color:#000;letter-spacing:-0.263px;">Cikkszám: 10010001</div>
<div style="left:608px;top:552px;width:270px;height:18px;background:#F0F0F0;"></div>
<div style="left:608px;top:552px;width:270px;height:1px;background:#A0A0A0;"></div>
<div style="left:608px;top:552px;width:1px;height:18px;background:#A0A0A0;"></div>
<div style="left:608px;top:569px;width:270px;height:1px;background:#FFFFFF;"></div>
<div style="left:877px;top:552px;width:1px;height:18px;background:#FFFFFF;"></div>
<div id="t69" class="t" style="left:611px;top:556px;font-size:11px;color:#000;letter-spacing:-0.121px;">Cikkcsoport: Nyomtatópapírok, írólapok</div>
<div style="left:880px;top:552px;width:106px;height:18px;background:#F0F0F0;"></div>
<div style="left:880px;top:552px;width:106px;height:1px;background:#A0A0A0;"></div>
<div style="left:880px;top:552px;width:1px;height:18px;background:#A0A0A0;"></div>
<div style="left:880px;top:569px;width:106px;height:1px;background:#FFFFFF;"></div>
<div style="left:985px;top:552px;width:1px;height:18px;background:#FFFFFF;"></div>
<div id="t70" class="t" style="left:883px;top:556px;font-size:11px;color:#000;letter-spacing:-0.081px;">Receptúra:</div>
<div style="left:988px;top:552px;width:152px;height:18px;background:#F0F0F0;"></div>
<div style="left:988px;top:552px;width:152px;height:1px;background:#A0A0A0;"></div>
<div style="left:988px;top:552px;width:1px;height:18px;background:#A0A0A0;"></div>
<div style="left:988px;top:569px;width:152px;height:1px;background:#FFFFFF;"></div>
<div style="left:1139px;top:552px;width:1px;height:18px;background:#FFFFFF;"></div>
<div id="t71" class="t" style="left:991px;top:556px;font-size:11px;color:#000;letter-spacing:-0.219px;">Összesen:</div>
<div style="left:299px;top:574px;width:13px;height:13px;background:#F0F0F0;"></div>
<div style="left:299px;top:574px;width:12px;height:1px;background:#A0A0A0;"></div>
<div style="left:299px;top:574px;width:1px;height:12px;background:#A0A0A0;"></div>
<div style="left:300px;top:575px;width:10px;height:1px;background:#696969;"></div>
<div style="left:300px;top:575px;width:1px;height:10px;background:#696969;"></div>
<div style="left:299px;top:586px;width:13px;height:1px;background:#FFFFFF;"></div>
<div style="left:311px;top:574px;width:1px;height:13px;background:#FFFFFF;"></div>
<div style="left:300px;top:585px;width:11px;height:1px;background:#E3E3E3;"></div>
<div style="left:310px;top:575px;width:1px;height:11px;background:#E3E3E3;"></div>
<div id="t72" class="t" style="left:316px;top:574px;font-size:11px;color:#9A9A9A;text-shadow:1px 1px 0 #fff;letter-spacing:-0.118px;">Receptúra mentése</div>
<div style="left:431px;top:574px;width:13px;height:13px;background:#FFFFFF;"></div>
<div style="left:431px;top:574px;width:12px;height:1px;background:#A0A0A0;"></div>
<div style="left:431px;top:574px;width:1px;height:12px;background:#A0A0A0;"></div>
<div style="left:432px;top:575px;width:10px;height:1px;background:#696969;"></div>
<div style="left:432px;top:575px;width:1px;height:10px;background:#696969;"></div>
<div style="left:431px;top:586px;width:13px;height:1px;background:#FFFFFF;"></div>
<div style="left:443px;top:574px;width:1px;height:13px;background:#FFFFFF;"></div>
<div style="left:432px;top:585px;width:11px;height:1px;background:#E3E3E3;"></div>
<div style="left:442px;top:575px;width:1px;height:11px;background:#E3E3E3;"></div>
<div id="t73" class="t" style="left:448px;top:574px;font-size:11px;color:#000;letter-spacing:-0.153px;">Gyűjtőkód ablak megjelenítése</div>
<div style="left:615px;top:574px;width:13px;height:13px;background:#FFFFFF;"></div>
<div style="left:615px;top:574px;width:12px;height:1px;background:#A0A0A0;"></div>
<div style="left:615px;top:574px;width:1px;height:12px;background:#A0A0A0;"></div>
<div style="left:616px;top:575px;width:10px;height:1px;background:#696969;"></div>
<div style="left:616px;top:575px;width:1px;height:10px;background:#696969;"></div>
<div style="left:615px;top:586px;width:13px;height:1px;background:#FFFFFF;"></div>
<div style="left:627px;top:574px;width:1px;height:13px;background:#FFFFFF;"></div>
<div style="left:616px;top:585px;width:11px;height:1px;background:#E3E3E3;"></div>
<div style="left:626px;top:575px;width:1px;height:11px;background:#E3E3E3;"></div>
<svg style="left:615px;top:574px" width="13" height="13" viewBox="0 0 13 13"><path d="M3 5.2v3l2.4 2.4 4.6-4.6v-3l-4.6 4.6z" fill="#000"/></svg>
<div id="t74" class="t" style="left:632px;top:574px;font-size:11px;color:#000;letter-spacing:-0.227px;">Cikk kereséskor a készlet kijelzése</div>
<div style="left:823px;top:574px;width:13px;height:13px;background:#FFFFFF;"></div>
<div style="left:823px;top:574px;width:12px;height:1px;background:#A0A0A0;"></div>
<div style="left:823px;top:574px;width:1px;height:12px;background:#A0A0A0;"></div>
<div style="left:824px;top:575px;width:10px;height:1px;background:#696969;"></div>
<div style="left:824px;top:575px;width:1px;height:10px;background:#696969;"></div>
<div style="left:823px;top:586px;width:13px;height:1px;background:#FFFFFF;"></div>
<div style="left:835px;top:574px;width:1px;height:13px;background:#FFFFFF;"></div>
<div style="left:824px;top:585px;width:11px;height:1px;background:#E3E3E3;"></div>
<div style="left:834px;top:575px;width:1px;height:11px;background:#E3E3E3;"></div>
<svg style="left:823px;top:574px" width="13" height="13" viewBox="0 0 13 13"><path d="M3 5.2v3l2.4 2.4 4.6-4.6v-3l-4.6 4.6z" fill="#000"/></svg>
<div id="t75" class="t" style="left:840px;top:574px;font-size:11px;color:#000;letter-spacing:-0.243px;">Kép megjelenítése</div>
<div style="left:295px;top:591px;width:850px;height:1px;background:#FFFFFF;"></div>
<svg style="left:335px;top:596px" width="14" height="14" viewBox="0 0 14 14"><path d="M1.6 0.2H10.2L13.8 3.8V12.4Q13.8 13.8 12.4 13.8H1.6Q0.2 13.8 0.2 12.4V1.6Q0.2 0.2 1.6 0.2z" fill="#5E3608"/><rect x="3" y="1" width="8" height="3.7" rx="1.6" fill="#FFF6E6"/><rect x="7.2" y="0.8" width="1.9" height="2.8" fill="#5E3608"/><rect x="1.2" y="6.9" width="11.6" height="6" rx="1.6" fill="#FFF6E6"/><path d="M4.8 8.2l4.4 4m0-4l-4.4 4" stroke="#5E3608" stroke-width="1.7" fill="none"/></svg>
<div id="t76" class="t" style="left:281.3px;top:613px;font-size:12px;color:#000;width:120px;text-align:center;letter-spacing:-0.294px;">Ment, bezár (F6)</div>
<div style="left:391px;top:594px;width:1px;height:33px;background:#A0A0A0;"></div>
<div style="left:392px;top:594px;width:1px;height:33px;background:#FFFFFF;"></div>
<svg style="left:434px;top:596px" width="14" height="14" viewBox="0 0 14 14"><path d="M1.6 0.2H10.2L13.8 3.8V12.4Q13.8 13.8 12.4 13.8H1.6Q0.2 13.8 0.2 12.4V1.6Q0.2 0.2 1.6 0.2z" fill="#5E3608"/><rect x="3" y="1" width="8" height="3.7" rx="1.6" fill="#FFF6E6"/><rect x="7.2" y="0.8" width="1.9" height="2.8" fill="#5E3608"/><rect x="1.2" y="6.9" width="11.6" height="6" rx="1.6" fill="#FFF6E6"/><rect x="4.2" y="8.4" width="5.6" height="3" fill="none" stroke="#5E3608" stroke-width="1.3"/></svg>
<div id="t77" class="t" style="left:381px;top:613px;font-size:12px;color:#000;width:120px;text-align:center;letter-spacing:-0.155px;">Ment, új (F3)</div>
<div style="left:491px;top:594px;width:1px;height:33px;background:#A0A0A0;"></div>
<div style="left:492px;top:594px;width:1px;height:33px;background:#FFFFFF;"></div>
<svg style="left:534px;top:596px" width="14" height="14" viewBox="0 0 14 14"><path d="M0.4 0.4h2.2l0.8 0.9h2.2v3.5h-5.2z" fill="#8C8C8C"/><path d="M8.2 3.4h2.2l0.8 0.9h2.4v3.4h-5.4z" fill="#8C8C8C"/><path d="M8.2 9.3h2.2l0.8 0.9h2.4v3.4h-5.4z" fill="#8C8C8C"/><path d="M2.6 4.8v7h5.6M2.6 6.2h5.6" fill="none" stroke="#8C8C8C" stroke-width="1.1"/></svg>
<div id="t78" class="t" style="left:481px;top:613px;font-size:12px;color:#9A9A9A;text-shadow:1px 1px 0 #fff;width:120px;text-align:center;letter-spacing:-0.375px;">Receptúra</div>
<svg style="left:590.5px;top:609px" width="8" height="4" viewBox="0 0 8 4"><path d="M0 0h8l-4 4z" fill="#000"/></svg>
<div style="left:606px;top:594px;width:1px;height:33px;background:#A0A0A0;"></div>
<div style="left:607px;top:594px;width:1px;height:33px;background:#FFFFFF;"></div>
<svg style="left:650px;top:599px" width="14" height="8" viewBox="0 0 14 8"><rect x="0.7" y="0.7" width="12.6" height="6.6" rx="2" fill="#fff" stroke="#8C8C8C" stroke-width="1.3"/><circle cx="7" cy="4" r="1.7" fill="#8C8C8C"/><circle cx="3.4" cy="4" r="0.8" fill="#8C8C8C"/><circle cx="10.6" cy="4" r="0.8" fill="#8C8C8C"/></svg>
<div id="t79" class="t" style="left:597px;top:613px;font-size:12px;color:#9A9A9A;text-shadow:1px 1px 0 #fff;width:120px;text-align:center;letter-spacing:-0.448px;">Haszon</div>
<div style="left:706px;top:594px;width:1px;height:33px;background:#A0A0A0;"></div>
<div style="left:707px;top:594px;width:1px;height:33px;background:#FFFFFF;"></div>
<svg style="left:750px;top:596px" width="14" height="14" viewBox="0 0 14 14"><rect x="0.7" y="0.7" width="12.6" height="12.6" rx="1.8" fill="#FFF6E6" stroke="#5E3608" stroke-width="1.4"/><path d="M0.7 3.8V2Q0.7 0.7 2 0.7H12Q13.3 0.7 13.3 2V3.8z" fill="#5E3608"/><path d="M0.7 7h12.6M0.7 10.1h12.6M4.9 3.8v9.5M9.1 3.8v9.5" stroke="#5E3608" stroke-width="1.1"/></svg>
<div id="t80" class="t" style="left:697px;top:613px;font-size:12px;color:#000;width:120px;text-align:center;letter-spacing:-0.393px;">Oszlop</div>
<div style="left:806px;top:594px;width:1px;height:33px;background:#A0A0A0;"></div>
<div style="left:807px;top:594px;width:1px;height:33px;background:#FFFFFF;"></div>
<svg style="left:850px;top:598px" width="14" height="10" viewBox="0 0 14 10"><rect x="0.7" y="0.7" width="12.6" height="8.6" rx="1.6" fill="#fff" stroke="#8C8C8C" stroke-width="1.3"/><circle cx="4.6" cy="3.8" r="1.4" fill="#8C8C8C"/><path d="M2.2 7.8c0-2.8 4.8-2.8 4.8 0z" fill="#8C8C8C"/><path d="M8.2 3.6h3.4M8.2 6.2h3.4" stroke="#8C8C8C" stroke-width="1.1"/></svg>
<div id="t81" class="t" style="left:797px;top:613px;font-size:12px;color:#9A9A9A;text-shadow:1px 1px 0 #fff;width:120px;text-align:center;letter-spacing:-0.883px;">Extra</div>
<div style="left:906px;top:594px;width:1px;height:33px;background:#A0A0A0;"></div>
<div style="left:907px;top:594px;width:1px;height:33px;background:#FFFFFF;"></div>
<svg style="left:950px;top:597px" width="14" height="12" viewBox="0 0 14 12"><path d="M1.6 1.2l10.8 9.6m0-9.6l-10.8 9.6" stroke="#E8921F" stroke-width="3.2" fill="none"/></svg>
<div id="t82" class="t" style="left:897px;top:613px;font-size:12px;color:#000;width:120px;text-align:center;letter-spacing:-0.699px;">Bezár (Esc)</div>
<div style="left:1006px;top:594px;width:1px;height:33px;background:#A0A0A0;"></div>
<div style="left:1007px;top:594px;width:1px;height:33px;background:#FFFFFF;"></div>
</div></body></html>
